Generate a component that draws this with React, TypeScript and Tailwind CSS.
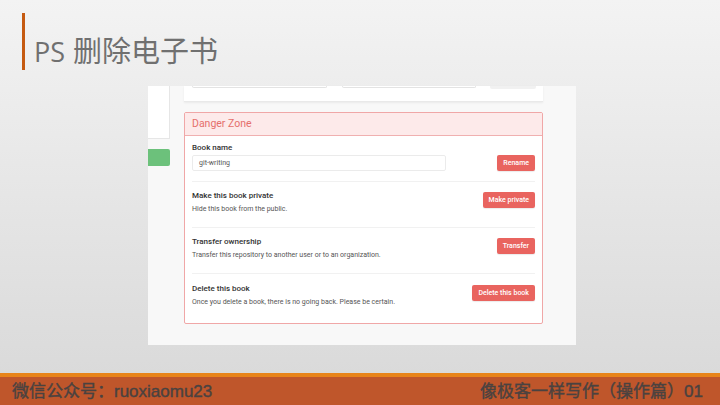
import React from "react";

const rows = [
  {
    title: "Make this book private",
    desc: "Hide this book from the public.",
    action: "Make private",
  },
  {
    title: "Transfer ownership",
    desc: "Transfer this repository to another user or to an organization.",
    action: "Transfer",
  },
  {
    title: "Delete this book",
    desc: "Once you delete a book, there is no going back. Please be certain.",
    action: "Delete this book",
  },
];

const DangerButton = ({ label }: { label: string }) => (
  <button className="block h-[16px] px-[6px] rounded-[2px] bg-[#e9645f] text-white text-[7px] font-medium leading-none shadow-[0_1px_1px_rgba(0,0,0,0.08)]">
    {label}
  </button>
);

const DangerZone = () => (
  <div className="mt-[10px] h-[212px] border border-[#f0a7a7] rounded-[2px] bg-white overflow-hidden">
    <div className="h-[23px] bg-[#fdeaea] border-b border-[#f0b0b0] flex items-center px-[7px]">
      <span className="text-[10.5px] text-[#e56f6c] leading-none">Danger Zone</span>
    </div>
    <div className="px-[7px]">
      <div className="pt-[7px] pb-[10px] border-b border-[#f1f1f1] flex items-end justify-between">
        <div>
          <div className="text-[8px] leading-[10px] font-medium text-[#333]">Book name</div>
          <div className="mt-[2px] w-[254px] h-[16px] border border-[#ebebeb] rounded-[2px] flex items-center px-[6px] text-[7px] leading-none text-[#555]">
            git-writing
          </div>
        </div>
        <DangerButton label="Rename" />
      </div>
      {rows.map((r, i) => (
        <div
          key={r.title}
          className={
            i < rows.length - 1
              ? "pt-[9px] pb-[13px] border-b border-[#f1f1f1] flex justify-between items-start"
              : "pt-[10px] pb-[18px] flex justify-between items-start"
          }
        >
          <div>
            <div className="text-[8px] leading-[10px] font-medium text-[#333]">{r.title}</div>
            <div className="mt-[3px] text-[7px] leading-[10px] text-[#555]">{r.desc}</div>
          </div>
          <div className="mt-[1px] flex">
            <DangerButton label={r.action} />
          </div>
        </div>
      ))}
    </div>
  </div>
);

export default function App() {
  return (
    <div
      className="w-[720px] h-[405px] overflow-hidden flex flex-col bg-gradient-to-b from-[#f3f3f3] to-[#d8d8d8]"
      style={{ fontFamily: '"Noto Sans CJK SC", sans-serif' }}
    >
      {/* slide title */}
      <div className="h-[86px] flex pt-[13px] pl-[22px]">
        <div className="w-[3px] h-[57px] bg-[#c55a11]" />
        <div className="ml-[9px] mt-[22px] flex items-baseline leading-none text-[#707070]">
          <span className="text-[27px]" style={{ fontFamily: '"Open Sans", sans-serif' }}>
            PS
          </span>
          <span className="ml-[8px] text-[29px]">删除电子书</span>
        </div>
      </div>

      {/* screenshot */}
      <div
        className="ml-[148px] w-[428px] h-[259px] bg-[#f8f8f8] flex"
        style={{ fontFamily: "Roboto, sans-serif" }}
      >
        <div className="w-[22px]">
          <div className="h-[53px] bg-white border-r border-b border-[#e6e6e6]" />
          <div className="mt-[10px] h-[17px] bg-[#6cc17b] rounded-r-[2px]" />
        </div>
        <div className="ml-[14px] w-[359px]">
          <div className="h-[16px] bg-white border-b border-[#e9e9e9] shadow-[0_1px_2px_rgba(0,0,0,0.06)] flex items-start">
            <div className="ml-[8px] w-[135px] h-[2px] border border-t-0 border-[#e3e3e3] rounded-b-[2px]" />
            <div className="ml-[15px] w-[134px] h-[2px] border border-t-0 border-[#e3e3e3] rounded-b-[2px]" />
            <div className="ml-[14px] w-[46px] h-[3px] bg-[#f1f1f1] rounded-b-[2px]" />
          </div>
          <DangerZone />
        </div>
      </div>

      {/* footer */}
      <div className="mt-[28px] h-[4px] bg-[#e8841a]" />
      <div
        className="h-[28px] bg-[#bf562b] flex items-center justify-between pl-[12px] pr-[17px] text-[17px] text-[#4a4240] leading-none [-webkit-text-stroke:0.4px_#4a4240]"
        style={{ fontFamily: '"Liberation Sans", "Noto Sans CJK SC", sans-serif' }}
      >
        <span>微信公众号：ruoxiaomu23</span>
        <span>像极客一样写作（操作篇）01</span>
      </div>
    </div>
  );
}
